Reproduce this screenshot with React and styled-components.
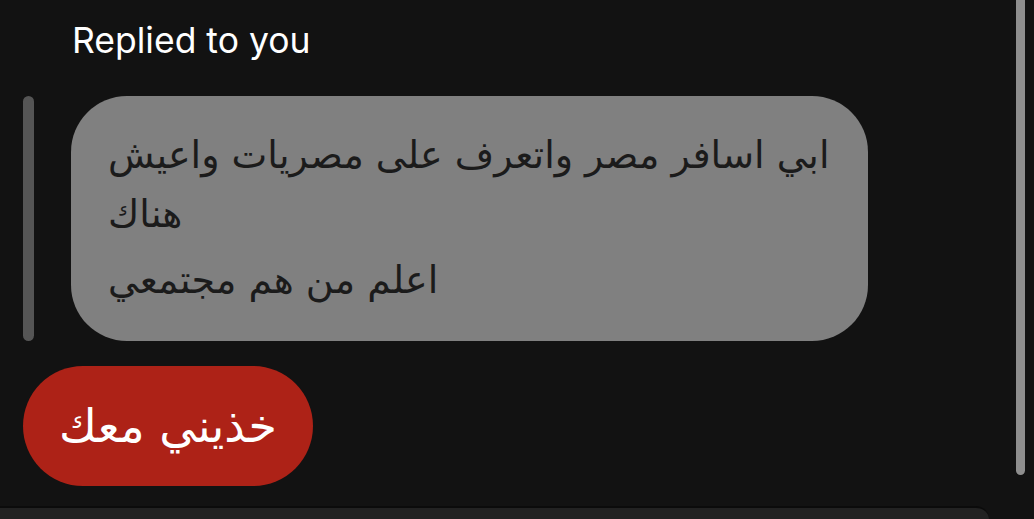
import styled, { createGlobalStyle } from "styled-components";

const GlobalStyle = createGlobalStyle`
  html, body {
    margin: 0;
    padding: 0;
    background: #121212;
  }
  body {
    font-family: Inter, "Liberation Sans", sans-serif;
  }
`;

export default function App() {
  return (
    <>
      <GlobalStyle />
      <Screen>
        <Thread>
          <ReplyLabel>Replied to you</ReplyLabel>
          <QuoteRow>
            <QuoteBar />
            <Bubble>
              <p>ابي اسافر مصر واتعرف على مصريات واعيش هناك</p>
              <p>اعلم من هم مجتمعي</p>
            </Bubble>
          </QuoteRow>
          <ReplyPill>خذيني معك</ReplyPill>
        </Thread>
        <Composer />
        <ScrollThumb />
      </Screen>
    </>
  );
}

const Screen = styled.div`
  position: relative;
  width: 1034px;
  height: 519px;
  overflow: hidden;
  display: flex;
  flex-direction: column;
  background: #121212;
`;

const Thread = styled.div`
  display: flex;
  flex-direction: column;
  align-items: flex-start;
  padding: 0 0 0 23px;
  flex: 1;
`;

const ReplyLabel = styled.div`
  margin: 20px 0 0 49px;
  height: 76px;
  color: #ffffff;
  font-size: 35.5px;
  line-height: 42px;
`;

const QuoteRow = styled.div`
  display: flex;
  gap: 37px;
  height: 245px;
`;

const QuoteBar = styled.div`
  width: 11px;
  border-radius: 6px;
  background: #555555;
`;

const Bubble = styled.div`
  box-sizing: border-box;
  width: 797px;
  padding: 30px 28px 0 37px;
  border-radius: 56px;
  background: #808080;
  color: #1b1b1b;
  font-family: "DejaVu Sans", "Noto Sans", sans-serif;
  font-size: 38px;
  line-height: 59px;

  p {
    margin: 0 0 7px;
    text-align: left;
    unicode-bidi: plaintext;
    direction: ltr;
  }
`;

const ReplyPill = styled.div`
  margin-top: 25px;
  width: 290px;
  height: 120px;
  border-radius: 60px;
  background: #ad2217;
  color: #ffffff;
  display: flex;
  align-items: center;
  justify-content: center;
  font-family: "DejaVu Sans", "Noto Sans", sans-serif;
  font-size: 46px;
`;

const Composer = styled.div`
  height: 11px;
  margin-right: 45px;
  border-top: 2px solid #0b0b0b;
  border-top-right-radius: 60px;
  background: #222222;
`;

const ScrollThumb = styled.div`
  position: absolute;
  top: -10px;
  right: 9px;
  width: 9px;
  height: 485px;
  border-radius: 5px;
  background: #8e8e8e;
`;
